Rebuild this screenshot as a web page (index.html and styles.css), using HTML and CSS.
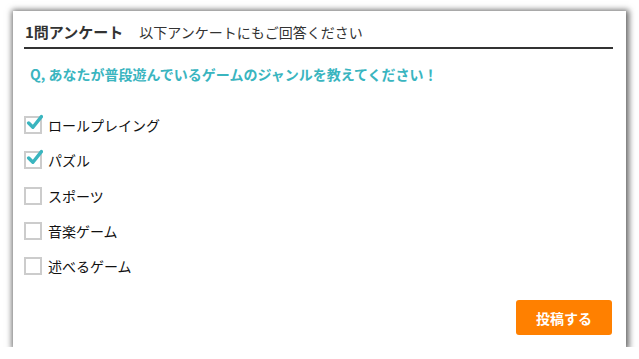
FILE: index.html
```html
<!DOCTYPE html>
<html lang="ja">
<head>
<meta charset="utf-8">
<link rel="stylesheet" href="styles.css">
</head>
<body>
<div class="card">
  <div class="head">
    <span class="title">1問アンケート</span>
    <span class="sub">以下アンケートにもご回答ください</span>
  </div>
  <p class="question">Q, あなたが普段遊んでいるゲームのジャンルを教えてください！</p>
  <ul class="options">
    <li class="opt"><span class="box checked"><svg viewBox="0 0 16 16" class="check"><path d="M2.5 8.5 L6.5 12.5 L14.5 2.5" fill="none" stroke="#3ab5bf" stroke-width="3.2" stroke-linecap="round" stroke-linejoin="round"/></svg></span>ロールプレイング</li>
    <li class="opt"><span class="box checked"><svg viewBox="0 0 16 16" class="check"><path d="M2.5 8.5 L6.5 12.5 L14.5 2.5" fill="none" stroke="#3ab5bf" stroke-width="3.2" stroke-linecap="round" stroke-linejoin="round"/></svg></span>パズル</li>
    <li class="opt"><span class="box"></span>スポーツ</li>
    <li class="opt"><span class="box"></span>音楽ゲーム</li>
    <li class="opt"><span class="box"></span>述べるゲーム</li>
  </ul>
  <div class="actions">
    <button class="submit">投稿する</button>
  </div>
</div>
</body>
</html>
```
FILE: styles.css
```css
html, body {
  margin: 0;
  padding: 0;
  background: #fff;
}
body {
  font-family: "Noto Sans CJK JP", "Noto Sans", sans-serif;
  color: #222;
}
.card {
  margin: 11px 0 0 13px;
  width: 613px;
  height: 336px;
  box-sizing: border-box;
  background: #fff;
  box-shadow: 1px 1px 6px 2px rgba(0,0,0,0.6);
  padding: 10px 13px 12px 11px;
  display: flex;
  flex-direction: column;
}
.head {
  display: flex;
  align-items: baseline;
  border-bottom: 2px solid #333;
  height: 26px;
  flex: none;
}
.title {
  font-size: 15px;
  font-weight: bold;
  color: #333;
  line-height: 22px;
  margin-right: 16px;
  padding-left: 1px;
}
.sub {
  font-size: 14px;
  color: #333;
  line-height: 22px;
}
.question {
  margin: 15px 0 0 6px;
  font-size: 14px;
  font-weight: bold;
  color: #3ab5bf;
  line-height: 20px;
  flex: none;
}
.options {
  list-style: none;
  margin: 31px 0 0 0;
  padding: 0;
  display: flex;
  flex-direction: column;
  gap: 15.25px;
  flex: none;
}
.opt {
  display: flex;
  align-items: center;
  font-size: 14px;
  color: #111;
  line-height: 20px;
  height: 20px;
}
.box {
  position: relative;
  width: 18px;
  height: 18px;
  box-sizing: border-box;
  border: 2px solid #ccc;
  margin-right: 6px;
  background: #fff;
}
.check {
  position: absolute;
  left: 0;
  top: -4px;
  width: 17px;
  height: 17px;
}
.actions {
  margin-top: auto;
  display: flex;
  justify-content: flex-end;
  padding-right: 1px;
  flex: none;
}
.submit {
  width: 96px;
  height: 35px;
  border: none;
  border-radius: 3px;
  background: #ff8000;
  color: #fff;
  font-family: "Noto Sans CJK JP", sans-serif;
  font-weight: bold;
  font-size: 14px;
}
```
